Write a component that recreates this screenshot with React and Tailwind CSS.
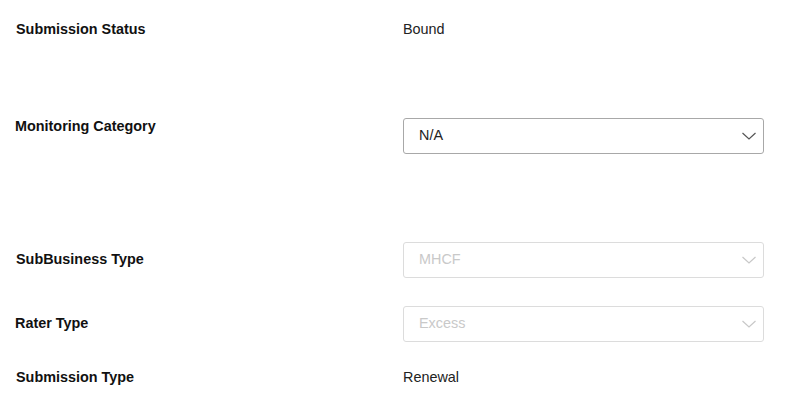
import React from 'react';

function Chevron({ disabled }) {
  return (
    <svg
      width="16"
      height="8"
      viewBox="0 0 16 8"
      fill="none"
      className={disabled ? 'text-[#c8c8c8]' : 'text-[#555]'}
    >
      <path d="M1.5 1l6.5 6 6.5-6" stroke="currentColor" strokeWidth="1.2" />
    </svg>
  );
}

function Select({ value, disabled }) {
  return (
    <div
      className={
        'flex h-9 w-[361px] items-center justify-between rounded-[3px] border bg-white pl-[15px] pr-[6px] ' +
        (disabled ? 'border-[#dcdcdc] text-[#c9c9c9]' : 'border-[#a8a8a8] text-[#222]')
      }
    >
      <span>{value}</span>
      <Chevron disabled={disabled} />
    </div>
  );
}

export default function App() {
  return (
    <div
      className="min-h-[415px] w-[795px] bg-white pt-3 text-[14.4px] text-[#111]"
      style={{ fontFamily: '"Liberation Sans", Arial, sans-serif' }}
    >
      {/* Submission Status */}
      <div className="flex h-9 items-center">
        <div className="w-[403px] pl-4 font-bold">Submission Status</div>
        <div className="text-[#222]">Bound</div>
      </div>

      {/* Monitoring Category */}
      <div className="mt-[68px] flex items-start">
        <div className="w-[403px] pl-[15px] font-bold leading-5">Monitoring Category</div>
        <div className="mt-0.5">
          <Select value="N/A" />
        </div>
      </div>

      {/* SubBusiness Type */}
      <div className="mt-[88px] flex h-9 items-center">
        <div className="w-[403px] pl-4 font-bold">SubBusiness Type</div>
        <Select value="MHCF" disabled />
      </div>

      {/* Rater Type */}
      <div className="mt-7 flex h-9 items-center">
        <div className="w-[403px] pl-[15px] font-bold">Rater Type</div>
        <Select value="Excess" disabled />
      </div>

      {/* Submission Type */}
      <div className="mt-[18px] flex h-9 items-center">
        <div className="w-[403px] pl-4 font-bold">Submission Type</div>
        <div className="text-[#222]">Renewal</div>
      </div>
    </div>
  );
}
